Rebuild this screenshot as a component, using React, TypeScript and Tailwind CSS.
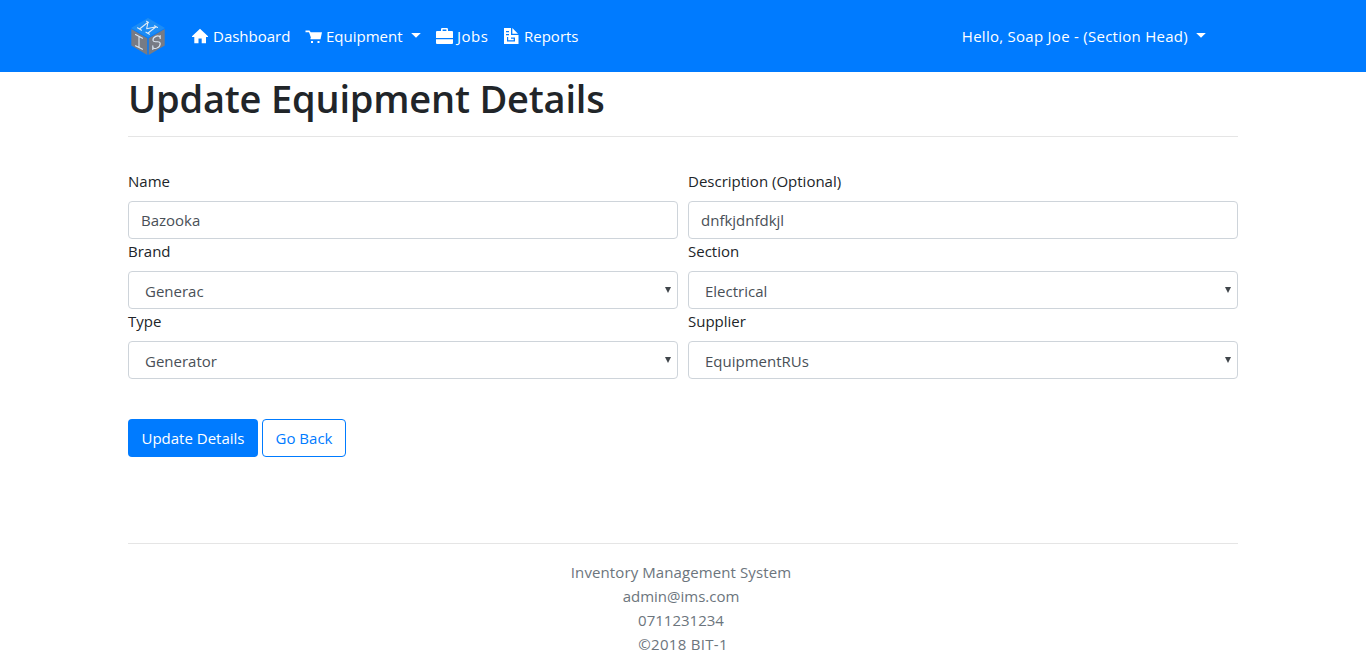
import type { ReactNode } from "react";

function Logo() {
  return (
    <svg width="40" height="40" viewBox="0 0 40 40" className="shrink-0">
      <path d="M20 2 37 12 20 21.5 3 12Z" fill="#1c8cf5" />
      <path d="M3.300 13 19.300 22.300V39L3.300 29.500Z" fill="#777b85" />
      <path d="M36.700 13 20.700 22.300V39L36.700 29.500Z" fill="#777b85" />
      <g fill="none" stroke="#dce9f6" strokeWidth="1.100" strokeLinecap="round" strokeLinejoin="round">
        <path d="M9.500 11.800 13.500 14.200M11.500 13 20 6.200 18.700 12.700 28 10.700 19.800 17.300M18.500 5.300 20.500 6.400M26.500 9.800 29.500 11.400M18 16.200 21.500 18.200" />
        <path d="M7.500 18.500 14.500 22.200M11 20.500V31.500M7.500 29.700 14.500 33.200" />
        <path d="M32.200 19.500V22.500M32.200 21.500C30.500 18 24.500 21 25 24.500 25.500 27.500 31.800 23.800 32.200 27.200 32.500 31 26.500 34.500 24.800 31.200M24.800 29.800V33.500" />
      </g>
    </svg>
  );
}

function HomeIcon() {
  return (
    <svg width="16" height="16" viewBox="0 0 16 16" fill="currentColor">
      <path d="M8 0.800 16 8.300V9H14V15.200H9.700V10.500H6.500V15.200H2.300V9H0V8.300Z" />
    </svg>
  );
}

function CartIcon() {
  return (
    <svg width="17" height="16" viewBox="0 0 17 16" fill="currentColor">
      <path d="M0.500 2.500H4.500L5.700 4.300H17L15.500 11.200H5.500V9.700H6L4 4.200H0.500Z" />
      <rect x="6" y="13" width="2" height="2" />
      <rect x="12.500" y="13" width="2" height="2" />
    </svg>
  );
}

function BriefcaseIcon() {
  return (
    <svg width="17" height="16" viewBox="0 0 17 16" fill="currentColor">
      <path fillRule="evenodd" d="M5 3V1.200Q5 0 6.200 0H10.800Q12 0 12 1.200V3H16Q17 3 17 4V10H0V4Q0 3 1 3ZM6.600 3H10.400V1.500H6.600Z" />
      <path d="M0 11.300H17V15Q17 16 16 16H1Q0 16 0 15Z" />
    </svg>
  );
}

function ReportIcon() {
  return (
    <svg width="15" height="16" viewBox="0 0 15 16" fill="currentColor">
      <path fillRule="evenodd" d="M0 0H7V7H14.500V16H0ZM2 3V4.200H5V3ZM2 6V7.200H5V6ZM3 9V13.500H11V9.500H7V10.700H9.700V12.300H4.200V9Z" />
      <path d="M8.300 0 14 5.700H8.300Z" />
    </svg>
  );
}

function Caret() {
  return (
    <svg width="10" height="5" viewBox="0 0 10 5" fill="currentColor" className="mb-0.5">
      <path d="M0.200 0H9.800L5 4.800Z" />
    </svg>
  );
}

function TextField({ label, value }: { label: string; value: string }) {
  return (
    <div className="h-[70px]">
      <label className="mb-2 block leading-6">{label}</label>
      <div className="flex h-[38px] items-center rounded border border-[#ced4da] px-3 text-[#495057]">{value}</div>
    </div>
  );
}

function SelectField({ label, value }: { label: string; value: string }) {
  return (
    <div className="h-[70px]">
      <label className="mb-2 block leading-6">{label}</label>
      <div className="flex h-[38px] items-center justify-between rounded border border-[#ced4da] pl-4 pr-[6px] text-[#495057]">
        <span className="pt-0.5">{value}</span>
        <svg width="6" height="6" viewBox="0 0 6 6" fill="#40464b">
          <path d="M0 0H6L3 6Z" />
        </svg>
      </div>
    </div>
  );
}

function NavLink({ className, children }: { className: string; children: ReactNode }) {
  return <a className={`flex items-center whitespace-nowrap ${className}`}>{children}</a>;
}

export default function App() {
  return (
    <div className="min-h-[656px] bg-white font-['Open_Sans',sans-serif] text-[15px] leading-6 text-[#212529]">
      <nav className="h-[72px] bg-[#007bff] text-white">
        <div className="mx-auto flex h-full w-[1110px] items-center">
          <Logo />
          <NavLink className="ml-6 w-[113px] gap-[5px]">
            <HomeIcon />
            <span>Dashboard</span>
          </NavLink>
          <NavLink className="w-[131px] gap-1">
            <CartIcon />
            <span>Equipment</span>
            <span className="ml-1">
              <Caret />
            </span>
          </NavLink>
          <NavLink className="w-[68px] gap-1">
            <BriefcaseIcon />
            <span className="tracking-[0.5px]">Jobs</span>
          </NavLink>
          <NavLink className="gap-[5px]">
            <ReportIcon />
            <span>Reports</span>
          </NavLink>
          <NavLink className="ml-auto mr-8 gap-2">
            <span className="tracking-[0.27px]">Hello, Soap Joe - (Section Head)</span>
            <Caret />
          </NavLink>
        </div>
      </nav>

      <main className="mx-auto w-[1110px]">
        <h1 className="h-16 whitespace-nowrap pt-[2px] text-[38px] font-semibold leading-[48px] tracking-[-0.2px]">Update Equipment Details</h1>
        <hr className="border-[#e5e5e5]" />
        <form className="mt-8 grid grid-cols-2 gap-x-[10px]">
          <TextField label="Name" value="Bazooka" />
          <TextField label="Description (Optional)" value="dnfkjdnfdkjl" />
          <SelectField label="Brand" value="Generac" />
          <SelectField label="Section" value="Electrical" />
          <SelectField label="Type" value="Generator" />
          <SelectField label="Supplier" value="EquipmentRUs" />
        </form>
        <div className="mt-10 flex gap-1">
          <button type="button" className="h-[38px] w-[130px] rounded bg-[#007bff] text-white">
            Update Details
          </button>
          <button type="button" className="h-[38px] w-[84px] rounded border border-[#007bff] text-[#007bff]">
            Go Back
          </button>
        </div>
      </main>

      <footer className="mx-auto mt-[86px] w-[1110px] border-t border-[#e5e5e5] pt-4 text-center text-[#6c757d]">
        <p className="pr-1 tracking-[0.1px]">Inventory Management System</p>
        <p className="pr-1">admin@ims.com</p>
        <p className="pr-1">0711231234</p>
        <p className="tracking-[0.3px]">©2018 BIT-1</p>
      </footer>
    </div>
  );
}
